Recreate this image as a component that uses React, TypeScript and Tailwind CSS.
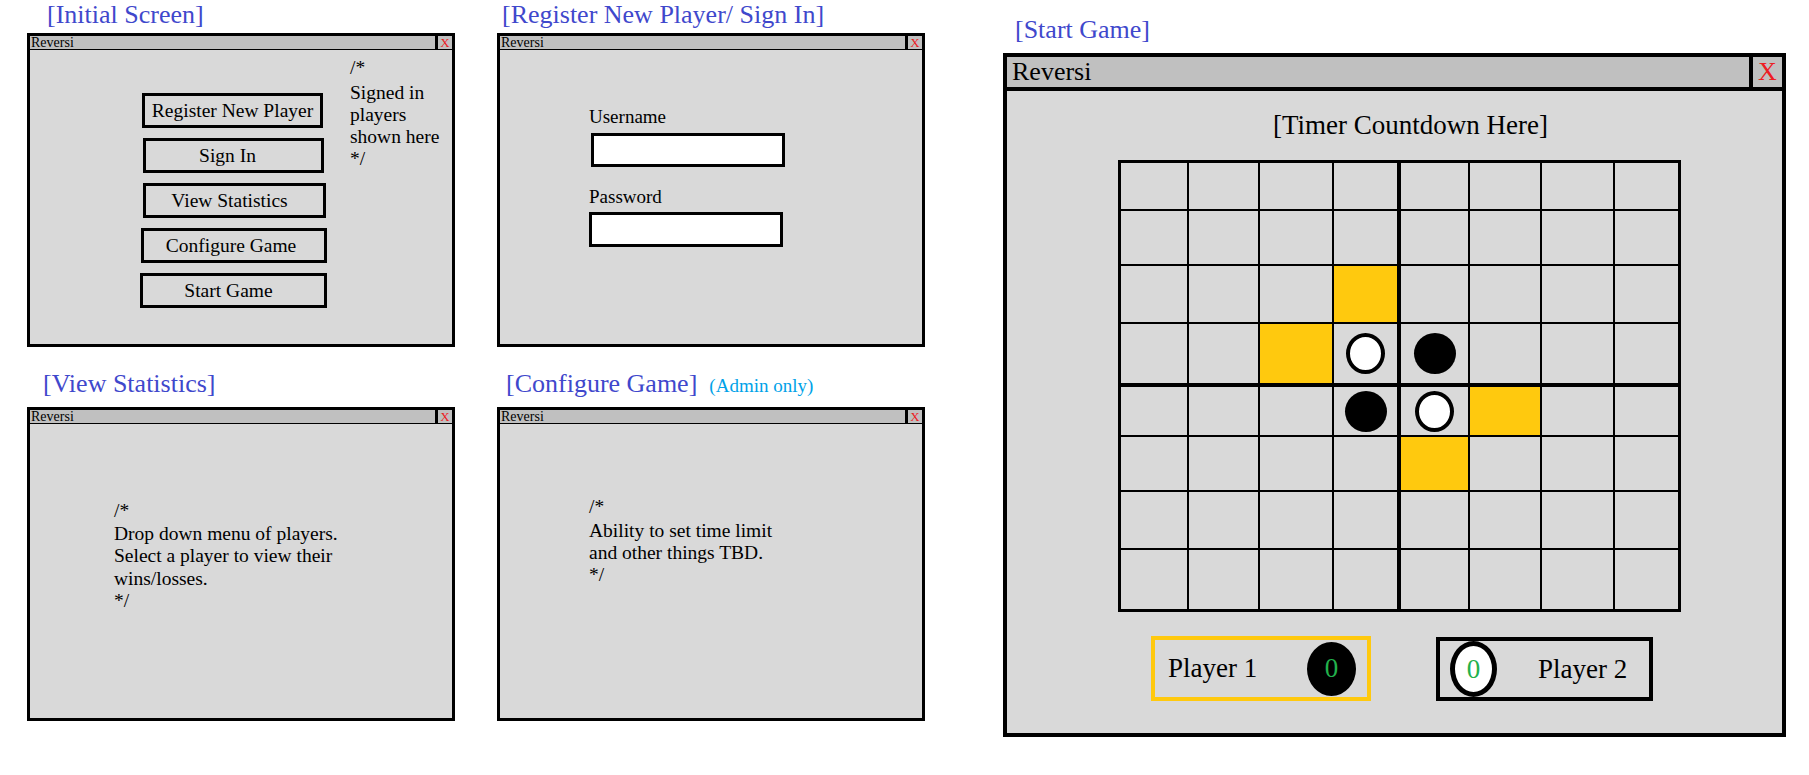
const SERIF = "font-['Liberation_Serif','Times_New_Roman',serif]";

const YELLOW = new Set(['2-3', '3-2', '4-5', '5-4']);
const DISCS: Record<string, 'white' | 'black'> = {
  '3-3': 'white',
  '3-4': 'black',
  '4-3': 'black',
  '4-4': 'white',
};

function MiniWindow({ children }: { children?: React.ReactNode }) {
  return (
    <div className="flex flex-col w-[428px] h-[314px] border-[3px] border-black bg-[#d9d9d9]">
      <div className="flex h-[14px] border-b border-black bg-[#c0c0c0]">
        <div className="flex-1 pl-[1px] text-[14px] leading-[13px] text-black">Reversi</div>
        <div className="w-[17px] border-l-[3px] border-black text-center text-[13px] leading-[13px] text-[#ed1c24]">
          X
        </div>
      </div>
      <div className="flex-1">{children}</div>
    </div>
  );
}

function Label({ children, className = '' }: { children: React.ReactNode; className?: string }) {
  return <div className={`text-[26px] text-[#3f48cc] whitespace-nowrap ${className}`}>{children}</div>;
}

function MenuButton({ label, className }: { label: string; className: string }) {
  return (
    <div className={`h-[35px] border-[3px] border-black flex items-center justify-center text-[19.5px] ${className}`}>
      {label}
    </div>
  );
}

function Board() {
  const cells = [];
  for (let r = 0; r < 8; r++) {
    for (let c = 0; c < 8; c++) {
      const key = `${r}-${c}`;
      const disc = DISCS[key];
      cells.push(
        <div
          key={key}
          className={`flex items-center justify-center ${YELLOW.has(key) ? 'bg-[#ffc90e]' : 'bg-[#d9d9d9]'} ${
            c === 3 ? 'border-r-2 border-black' : ''
          } ${r === 3 ? 'border-b-2 border-black' : ''}`}
        >
          {disc === 'white' && <div className="w-[39px] h-[41px] rounded-[50%] bg-white border-[4px] border-black" />}
          {disc === 'black' && <div className="w-[42px] h-[41px] rounded-[50%] bg-black" />}
        </div>
      );
    }
  }
  return (
    <div className="grid grid-cols-[66px_69px_72px_65px_67px_70px_71px_63px] grid-rows-[46px_53px_56px_61px_48px_53px_56px_59px] gap-[2px] bg-black border-[3px] border-black w-fit">
      {cells}
    </div>
  );
}

export default function App() {
  return (
    <div className={`${SERIF} w-[1809px] h-[775px] bg-white text-black flex pl-[27px] overflow-hidden`}>
      {/* left mockups */}
      <div className="flex flex-col w-[898px]">
        <div className="flex gap-[42px]">
          <div className="flex flex-col">
            <Label className="h-[33px] leading-[30px] pl-[20px]">[Initial Screen]</Label>
            <MiniWindow>
              <div className="flex pl-[110px]">
                <div className="flex flex-col gap-[10px] mt-[43px] w-[187px]">
                  <MenuButton label="Register New Player" className="ml-[2px] w-[181px]" />
                  <MenuButton label="Sign In" className="ml-[3px] w-[181px] pr-[12px]" />
                  <MenuButton label="View Statistics" className="ml-[3px] w-[183px] pr-[10px]" />
                  <MenuButton label="Configure Game" className="ml-[1px] w-[186px] pr-[6px]" />
                  <MenuButton label="Start Game" className="w-[187px] pr-[10px]" />
                </div>
                <div className="ml-[23px] mt-[7px] text-[19.5px] leading-[22px] whitespace-nowrap">
                  <div className="mb-[3px]">/*</div>
                  <div>Signed in</div>
                  <div>players</div>
                  <div>shown here</div>
                  <div>*/</div>
                </div>
              </div>
            </MiniWindow>
          </div>

          <div className="flex flex-col">
            <Label className="h-[33px] leading-[30px] pl-[5px]">[Register New Player/ Sign In]</Label>
            <MiniWindow>
              <div className="flex flex-col pl-[89px] pt-[56px] text-[19px] leading-[22px]">
                <div>Username</div>
                <div className="mt-[5px] ml-[2px] w-[194px] h-[34px] border-[3px] border-black bg-white" />
                <div className="mt-[19px]">Password</div>
                <div className="mt-[4px] w-[194px] h-[35px] border-[3px] border-black bg-white" />
              </div>
            </MiniWindow>
          </div>
        </div>

        <div className="flex gap-[42px] mt-[20px]">
          <div className="flex flex-col">
            <Label className="h-[40px] pt-[2px] leading-[30px] pl-[16px]">[View Statistics]</Label>
            <MiniWindow>
              <div className="pl-[84px] pt-[76px] text-[19.5px] leading-[22.5px]">
                <div>/*</div>
                <div>Drop down menu of players.</div>
                <div>Select a player to view their</div>
                <div>wins/losses.</div>
                <div>*/</div>
              </div>
            </MiniWindow>
          </div>

          <div className="flex flex-col">
            <div className="flex items-baseline h-[40px] pt-[2px] pl-[9px]">
              <Label className="leading-[30px]">[Configure Game]</Label>
              <span className="ml-[12px] text-[19px] text-[#00a2e8]">(Admin only)</span>
            </div>
            <MiniWindow>
              <div className="pl-[89px] pt-[72px] text-[19.5px] leading-[22px]">
                <div className="mb-[2px]">/*</div>
                <div>Ability to set time limit</div>
                <div>and other things TBD.</div>
                <div>*/</div>
              </div>
            </MiniWindow>
          </div>
        </div>
      </div>

      {/* start game mockup */}
      <div className="flex flex-col ml-[78px]">
        <Label className="h-[53px] pt-[15px] leading-[30px] pl-[12px]">[Start Game]</Label>
        <div className="flex flex-col w-[783px] h-[684px] border-[4px] border-black bg-[#d9d9d9]">
          <div className="flex h-[34px] border-b-[4px] border-black bg-[#c0c0c0]">
            <div className="flex-1 pl-[5px] text-[26px] leading-[30px]">Reversi</div>
            <div className="w-[33px] border-l-[4px] border-black text-center text-[26px] leading-[30px] text-[#ed1c24]">
              X
            </div>
          </div>
          <div className="flex flex-col">
            <div className="mt-[17px] ml-[266px] text-[27px] leading-[34px]">[Timer Countdown Here]</div>
            <div className="mt-[18px] ml-[111px]">
              <Board />
            </div>
            <div className="flex mt-[24px] ml-[144px]">
              <div className="flex items-center justify-between w-[220px] h-[65px] border-[4px] border-[#ffc90e] pl-[13px] pr-[11px]">
                <span className="text-[27px]">Player 1</span>
                <div className="w-[49px] h-[54px] rounded-[50%] bg-black flex items-center justify-center text-[27px] text-[#22b14c]">
                  0
                </div>
              </div>
              <div className="flex items-center w-[217px] h-[64px] mt-[1px] ml-[65px] border-[4px] border-black pl-[10px]">
                <div className="w-[47px] h-[56px] rounded-[50%] bg-white border-[5px] border-black flex items-center justify-center text-[27px] text-[#22b14c]">
                  0
                </div>
                <span className="ml-[41px] text-[27px]">Player 2</span>
              </div>
            </div>
          </div>
        </div>
      </div>
    </div>
  );
}
